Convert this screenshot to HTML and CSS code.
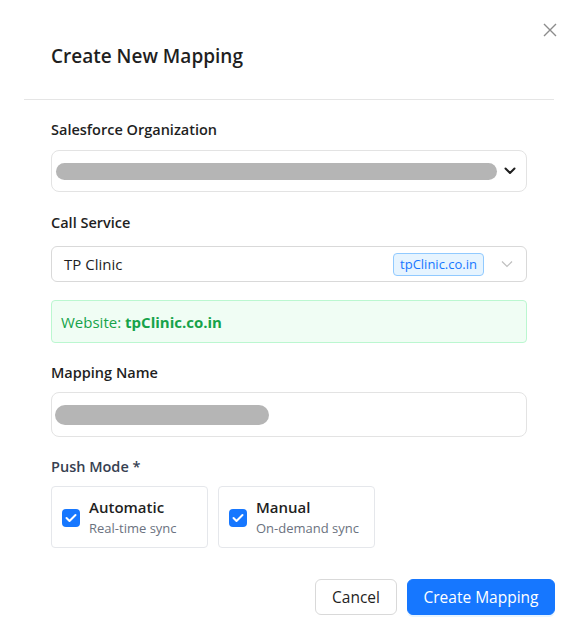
FILE: index.html
```html
<!DOCTYPE html>
<html>
<head>
<meta charset="utf-8">
<link rel="stylesheet" href="styles.css">
</head>
<body>
<div class="modal">
  <button class="close" aria-label="Close">
    <svg width="14" height="14" viewBox="0 0 14 14"><path d="M1 1L13 13M13 1L1 13" stroke="#8c8c8c" stroke-width="1.4" fill="none"/></svg>
  </button>
  <div class="header"><h1 class="title">Create New Mapping</h1></div>
  <div class="divider"></div>
  <div class="body">
    <div class="field">
      <label class="label">Salesforce Organization</label>
      <div class="select select-org">
        <div class="blur blur-org"></div>
        <svg class="chev-bold" width="12" height="8" viewBox="0 0 12 8"><path d="M1.5 1.5L6 6L10.5 1.5" stroke="#1f1f1f" stroke-width="2" fill="none" stroke-linecap="round" stroke-linejoin="round"/></svg>
      </div>
    </div>
    <div class="field">
      <label class="label label-call">Call Service</label>
      <div class="select select-svc">
        <span class="svc-name">TP Clinic</span>
        <span class="tag">tpClinic.co.in</span>
        <svg class="chev-thin" width="12" height="8" viewBox="0 0 12 8"><path d="M1 1.5L6 6.5L11 1.5" stroke="#bfbfbf" stroke-width="1.2" fill="none"/></svg>
      </div>
      <div class="website">Website: <strong>tpClinic.co.in</strong></div>
    </div>
    <div class="field">
      <label class="label label-name">Mapping Name</label>
      <div class="input">
        <div class="blur blur-name"></div>
      </div>
    </div>
    <div class="field">
      <label class="label label-push">Push Mode *</label>
      <div class="modes">
        <div class="mode">
          <span class="check"><svg width="12" height="10" viewBox="0 0 12 10"><path d="M1.5 5L4.5 8L10.5 2" stroke="#fff" stroke-width="2" fill="none" stroke-linecap="round" stroke-linejoin="round"/></svg></span>
          <div class="mode-text"><div class="mode-title">Automatic</div><div class="mode-sub">Real-time sync</div></div>
        </div>
        <div class="mode">
          <span class="check"><svg width="12" height="10" viewBox="0 0 12 10"><path d="M1.5 5L4.5 8L10.5 2" stroke="#fff" stroke-width="2" fill="none" stroke-linecap="round" stroke-linejoin="round"/></svg></span>
          <div class="mode-text"><div class="mode-title">Manual</div><div class="mode-sub">On-demand sync</div></div>
        </div>
      </div>
    </div>
  </div>
  <div class="footer">
    <button class="btn btn-default">Cancel</button>
    <button class="btn btn-primary">Create Mapping</button>
  </div>
</div>
</body>
</html>
```
FILE: styles.css
```css
* { box-sizing: border-box; }
html, body { margin: 0; padding: 0; background: #fff; }
body {
  font-family: "Open Sans", "Noto Sans", sans-serif;
  color: #1f1f1f;
  width: 576px;
  height: 635px;
  overflow: hidden;
}
.modal {
  position: relative;
}
.close {
  position: absolute;
  top: 23px;
  left: 543px;
  width: 14px;
  height: 14px;
  border: 0;
  background: none;
  padding: 0;
  display: flex;
}
.header { padding: 42px 51px 0; height: 99px; }
.title {
  margin: 0;
  font-size: 19px;
  font-weight: 600;
  line-height: 28px;
  color: #1f1f1f;
}
.divider { height: 1px; background: #e5e5e5; margin: 0 22px 0 24px; }
.body { padding: 19px 49px 0 51px; display: flex; flex-direction: column; }
.field { display: flex; flex-direction: column; }
.label {
  font-size: 14.5px;
  font-weight: 600;
  line-height: 22px;
  color: #1f1f1f;
  margin-bottom: 9px;
}
.label-call { margin-bottom: 12px; }
.label-name { margin-bottom: 8px; }
.select, .input {
  display: flex;
  align-items: center;
  border: 1px solid #e3e3e3;
  border-radius: 8px;
  background: #fff;
}
.select-org { height: 42px; padding: 0 10px 0 4px; justify-content: space-between; margin-bottom: 20px; }
.blur { background: #b5b5b5; border-radius: 9px; }
.blur-org { width: 441px; height: 17px; }
.select-svc { height: 36px; padding: 0 13px 0 12px; border-color: #d9d9d9; border-radius: 6px; }
.svc-name { font-size: 15px; color: #1f1f1f; flex: 1; }
.tag {
  font-size: 13px;
  color: #1677ff;
  background: #e6f4ff;
  border: 1px solid #91caff;
  border-radius: 4px;
  padding: 0 6px;
  line-height: 21px;
  margin-right: 17px;
}
.website {
  margin-top: 18px;
  height: 43px;
  display: flex;
  align-items: center;
  padding: 0 9px;
  background: #f0fdf4;
  border: 1px solid #bbf7d0;
  border-radius: 4px;
  color: #16a34a;
  font-size: 15px;
  margin-bottom: 19px;
}
.website strong { font-weight: 700; margin-left: 4px; }
.input { height: 45px; padding: 0 3px; margin-bottom: 19px; }
.blur-name { width: 214px; height: 20px; border-radius: 10px; }
.label-push { font-weight: 600; color: #374151; margin-bottom: 8px; }
.modes { display: flex; gap: 10px; }
.mode {
  display: flex;
  align-items: center;
  gap: 9px;
  border: 1px solid #e5e7eb;
  border-radius: 4px;
  padding: 0 10px;
  height: 62px;
  width: 157px;
}
.check {
  width: 18px;
  height: 18px;
  border-radius: 4px;
  background: #1677ff;
  display: flex;
  align-items: center;
  justify-content: center;
  flex: none;
  margin-top: 2px;
}
.mode-title { font-size: 15px; font-weight: 600; line-height: 22px; color: #1f1f1f; }
.mode-sub { font-size: 13px; color: #6b7280; line-height: 20px; }
.footer {
  display: flex;
  justify-content: flex-end;
  gap: 10px;
  padding: 31px 21px 0 0;
}
.btn {
  font-family: inherit;
  font-size: 15.5px;
  height: 36px;
  border-radius: 6px;
  padding: 0;
  white-space: nowrap;
  cursor: pointer;
}
.btn-default { background: #fff; border: 1px solid #d9d9d9; color: #1f1f1f; width: 82px; }
.btn-primary { background: #1677ff; border: 1px solid #1677ff; color: #fff; width: 148px; box-shadow: 0 2px 0 rgba(5,145,255,0.1); }
```
